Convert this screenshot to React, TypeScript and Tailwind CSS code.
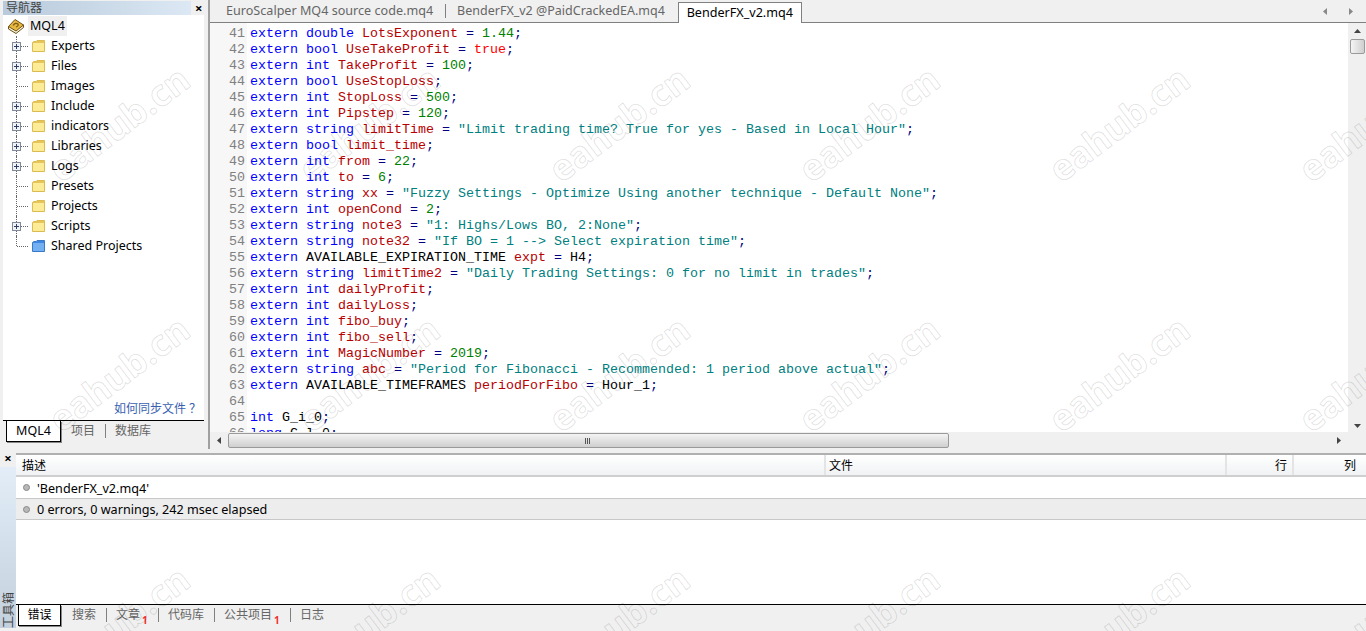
import { ReactNode } from 'react';

const uiFont = "font-['Noto_Sans','Noto_Sans_CJK_SC',sans-serif]";

const folders = [
  { name: 'Experts', plus: true },
  { name: 'Files', plus: true },
  { name: 'Images', plus: false },
  { name: 'Include', plus: true },
  { name: 'indicators', plus: true },
  { name: 'Libraries', plus: true },
  { name: 'Logs', plus: true },
  { name: 'Presets', plus: false },
  { name: 'Projects', plus: false },
  { name: 'Scripts', plus: true },
  { name: 'Shared Projects', plus: false, blue: true },
];

const code: [number, string][] = [
  [41, 'extern double LotsExponent = 1.44;'],
  [42, 'extern bool UseTakeProfit = true;'],
  [43, 'extern int TakeProfit = 100;'],
  [44, 'extern bool UseStopLoss;'],
  [45, 'extern int StopLoss = 500;'],
  [46, 'extern int Pipstep = 120;'],
  [47, 'extern string limitTime = "Limit trading time? True for yes - Based in Local Hour";'],
  [48, 'extern bool limit_time;'],
  [49, 'extern int from = 22;'],
  [50, 'extern int to = 6;'],
  [51, 'extern string xx = "Fuzzy Settings - Optimize Using another technique - Default None";'],
  [52, 'extern int openCond = 2;'],
  [53, 'extern string note3 = "1: Highs/Lows BO, 2:None";'],
  [54, 'extern string note32 = "If BO = 1 --> Select expiration time";'],
  [55, 'extern AVAILABLE_EXPIRATION_TIME expt = H4;'],
  [56, 'extern string limitTime2 = "Daily Trading Settings: 0 for no limit in trades";'],
  [57, 'extern int dailyProfit;'],
  [58, 'extern int dailyLoss;'],
  [59, 'extern int fibo_buy;'],
  [60, 'extern int fibo_sell;'],
  [61, 'extern int MagicNumber = 2019;'],
  [62, 'extern string abc = "Period for Fibonacci - Recommended: 1 period above actual";'],
  [63, 'extern AVAILABLE_TIMEFRAMES periodForFibo = Hour_1;'],
  [64, ''],
  [65, 'int G_i_0;'],
  [66, 'long G_l_0;'],
];

const keywords = ['extern', 'double', 'bool', 'int', 'long', 'string'];
const plainWords = ['AVAILABLE_EXPIRATION_TIME', 'AVAILABLE_TIMEFRAMES', 'H4', 'Hour_1', 'G_i_0', 'G_l_0'];

function tokenColor(tok: string) {
  if (tok.startsWith('"')) return 'text-[#008080]';
  if (keywords.includes(tok)) return 'text-[#0000ff]';
  if (tok === 'true') return 'text-[#ff0000]';
  if (/^[0-9.]+$/.test(tok)) return 'text-[#008000]';
  if (plainWords.includes(tok)) return 'text-black';
  if (/^\w+$/.test(tok)) return 'text-[#b80000]';
  return 'text-[#000080]';
}

function CodeLine({ text }: { text: string }) {
  const tokens = text.match(/"[^"]*"|[\w.]+|\s+|[=;]/g) || [];
  return (
    <div className="h-4 leading-4 whitespace-pre">
      {tokens.map((t, i) => (
        <span key={i} className={tokenColor(t)}>{t}</span>
      ))}
    </div>
  );
}

function FolderIcon({ blue }: { blue?: boolean }) {
  return (
    <svg width="13" height="12" viewBox="0 0 13 12" className="shrink-0">
      <path d="M0.5 11.500V2.500L2 1.500H4L5 0.500H12.500V11.500z" fill={blue ? '#3f86e0' : '#e6c65a'} stroke={blue ? '#3a78c8' : '#dcbb50'} />
      <rect x="1" y="3" width="11" height="8" fill={blue ? '#72b0f2' : '#fcec98'} />
    </svg>
  );
}

function BookIcon() {
  return (
    <svg width="16" height="15" viewBox="0 0 16 15" className="shrink-0">
      <path d="M0.500 7.500L0.500 10L8 14.500L15.500 8.500L15.500 6z" fill="#f7f1d8" stroke="#6e5216" />
      <path d="M0.500 7.500L7 0.500L15.500 6L8 12z" fill="#e6b840" stroke="#6e5216" />
      <path d="M5 6.500Q7.500 3 10 5Q11 7 8 8" fill="none" stroke="#7a5a18" strokeWidth="1.200" />
    </svg>
  );
}

function TreeRow({ name, plus, blue, last }: { name: string; plus: boolean; blue?: boolean; last: boolean }) {
  return (
    <div className="flex h-5 items-center">
      <div className="relative h-5 w-[26px] shrink-0">
        <div className={`absolute left-[13px] top-0 border-l border-dotted border-[#666] ${last ? 'h-[10px]' : 'h-5'}`} />
        <div className="absolute left-[14px] top-[10px] w-[11px] border-t border-dotted border-[#666]" />
        {plus && (
          <div className="absolute left-[9px] top-[6px] flex h-[9px] w-[9px] items-center justify-center border border-[#7f8a9c] bg-[#f2f2f2]">
            <svg width="7" height="7" viewBox="0 0 7 7">
              <path d="M1 3.500h5M3.500 1v5" stroke="#2b3f6b" />
            </svg>
          </div>
        )}
      </div>
      <div className="ml-[3px]"><FolderIcon blue={blue} /></div>
      <span className="ml-[6px] text-[12.5px] leading-5 text-black">{name}</span>
    </div>
  );
}

function TabSep() {
  return <div className="-mr-px h-[14px] w-px bg-[#808080]" />;
}

function Grey({ children, cjk }: { children: ReactNode; cjk?: boolean }) {
  return <span className={`${cjk ? 'text-[12px]' : 'text-[12.6px]'} text-[#666]`}>{children}</span>;
}

function Badge() {
  return <span className="relative top-[5px] ml-[2px] w-[6px] text-[10px] font-bold leading-none text-[#f03030]">1</span>;
}

function Navigator() {
  return (
    <div className="flex h-[449px] w-[210px] shrink-0 flex-col border-r-2 border-[#a0a0a0] pl-[3px] pr-[4px] pt-px">
      <div className="flex h-[14px] items-center">
        <div className="flex h-[14px] w-[188px] items-center bg-gradient-to-r from-[#b8cadb] to-[#dce8f4] pl-[3px] text-[12px] leading-[14px] text-[#444]">导航器</div>
        <span className="ml-[4px] text-[13px] font-bold leading-none text-black">×</span>
      </div>
      <div className="flex h-[406px] flex-col border-b border-black bg-white pt-px">
        <div className="flex h-[20px] items-center pl-[5px]">
          <BookIcon />
          <span className="ml-[4px] bg-[#f0f0f0] px-[2px] text-[12.5px] leading-[20px]">MQL4</span>
        </div>
        {folders.map((f, i) => (
          <TreeRow key={f.name} name={f.name} plus={f.plus} blue={f.blue} last={i === folders.length - 1} />
        ))}
        <div className="mt-auto pb-[1px] pr-[3px] text-right text-[12px] leading-5 text-[#3a5fb0]">如何同步文件 ？</div>
      </div>
      <div className="flex h-[26px] items-start">
        <div className="ml-[3px] flex h-[21px] w-[55px] items-center justify-center border-x border-b border-black bg-white text-[12.5px] shadow-[1px_1px_0_#888]">MQL4</div>
        <div className="ml-[10px] flex h-[20px] items-center gap-[10px]">
          <Grey cjk>项目</Grey>
          <TabSep />
          <Grey cjk>数据库</Grey>
        </div>
      </div>
    </div>
  );
}

function Editor() {
  return (
    <div className="flex h-[449px] flex-1 flex-col overflow-hidden">
      <div className="flex h-[23px] shrink-0 items-end border-b border-[#808080] pl-[16px]">
        <div className="flex h-[22px] items-center">
          <Grey>EuroScalper MQ4 source code.mq4</Grey>
          <div className="mx-[12px]"><TabSep /></div>
          <span className="text-[12.5px] text-[#666]">BenderFX_v2 @PaidCrackedEA.mq4</span>
        </div>
        <div className="relative top-px ml-[13px] flex h-[21px] w-[124px] items-center justify-center border-x border-t border-[#808080] bg-white text-[12.6px] text-black">BenderFX_v2.mq4</div>
        <div className="ml-auto mr-[13px] flex h-[22px] items-center gap-[22px]">
          <svg width="4" height="7" viewBox="0 0 4 7"><path d="M4 0v7L0 3.5z" fill="#888" /></svg>
          <svg width="4" height="7" viewBox="0 0 4 7"><path d="M0 0v7l4-3.5z" fill="#888" /></svg>
        </div>
      </div>
      <div className="flex min-h-0 flex-1 bg-white">
        <div className="flex min-w-0 flex-1 flex-col">
          <div className="flex min-h-0 flex-1 overflow-hidden font-['Liberation_Mono',monospace] text-[13.33px]">
            <div className="h-full w-[37px] shrink-0 bg-[#f7f7f7] pr-[2px] pt-[3px] text-right text-[#808080]">
              {code.map(([n]) => <div key={n} className="h-4 leading-4">{n}</div>)}
            </div>
            <div className="pl-[3px] pt-[3px]">
              {code.map(([n, t]) => <CodeLine key={n} text={t} />)}
            </div>
          </div>
          <div className="flex h-[17px] shrink-0 items-center bg-[#f0f0f0]">
            <div className="flex w-[18px] justify-center">
              <svg width="4" height="7" viewBox="0 0 4 7"><path d="M4 0v7L0 3.5z" fill="#444" /></svg>
            </div>
            <div className="flex h-[15px] w-[721px] items-center justify-center rounded-[2px] border border-[#9a9a9a] bg-gradient-to-b from-[#f4f4f4] to-[#cfcfcf]">
              <div className="ml-[-2px] flex gap-px">
                <div className="h-[6px] w-px bg-[#555]" /><div className="h-[6px] w-px bg-[#555]" /><div className="h-[6px] w-px bg-[#555]" />
              </div>
            </div>
            <div className="ml-auto mr-[7px]">
              <svg width="4" height="7" viewBox="0 0 4 7"><path d="M0 0v7l4-3.5z" fill="#444" /></svg>
            </div>
          </div>
        </div>
        <div className="flex w-[18px] shrink-0 flex-col items-center bg-[#f0f0f0] pt-[6px]">
          <svg width="7" height="4" viewBox="0 0 7 4"><path d="M0 4h7L3.500 0z" fill="#444" /></svg>
          <div className="mt-[6px] h-[15px] w-[15px] rounded-[2px] border border-[#9a9a9a] bg-gradient-to-r from-[#f4f4f4] to-[#cfcfcf]" />
          <div className="mt-auto mb-[21px]">
            <svg width="7" height="4" viewBox="0 0 7 4"><path d="M0 0h7L3.500 4z" fill="#444" /></svg>
          </div>
        </div>
      </div>
    </div>
  );
}

function Toolbox() {
  return (
    <div className="flex min-h-0 flex-1 pt-[4px]">
      <div className="flex w-[16px] shrink-0 flex-col pb-[3px]">
        <div className="flex h-[14px] items-start justify-center text-[13px] font-bold leading-[10px]">×</div>
        <div className="flex flex-1 items-end justify-center bg-gradient-to-b from-[#e2edf7] to-[#c3d1de]">
          <span className="rotate-180 text-[12px] leading-[15px] text-[#444] [text-orientation:sideways] [writing-mode:vertical-rl]">工具箱</span>
        </div>
      </div>
      <div className="flex min-w-0 flex-1 flex-col">
        <div className="flex min-h-0 flex-1 flex-col border-t-2 border-[#b0b0b0] bg-white">
          <div className="flex h-[22px] shrink-0 border-b-2 border-[#cfcfcf] bg-gradient-to-b from-white to-[#f0f2f4] text-[12px] text-black">
            <div className="w-[810px] border-r-2 border-[#e4e4e4] pl-[6px] leading-[22px]">描述</div>
            <div className="w-[401px] border-r-2 border-[#e4e4e4] pl-[3px] leading-[22px]">文件</div>
            <div className="w-[67px] border-r-2 border-[#e4e4e4] pr-[5px] text-right leading-[22px]">行</div>
            <div className="w-[67px] pr-[5px] text-right leading-[22px]">列</div>
          </div>
          <div className="flex h-[22px] items-center border-b border-[#c8c8c8] pl-[7px] text-[12.6px]">
            <div className="h-[7px] w-[7px] rounded-full border border-[#888] bg-[#b8b8b8]" />
            <span className="ml-[7px] pt-[3px]">'BenderFX_v2.mq4'</span>
          </div>
          <div className="flex h-[21px] items-center border-b border-[#c8c8c8] bg-[#ededed] pl-[7px] text-[12.6px]">
            <div className="h-[7px] w-[7px] rounded-full border border-[#888] bg-[#b8b8b8]" />
            <span className="ml-[7px] pt-[3px]">0 errors, 0 warnings, 242 msec elapsed</span>
          </div>
        </div>
        <div className="flex h-[21px] shrink-0 items-start border-t border-black">
          <div className="ml-[2px] flex h-[21px] w-[43px] items-center justify-center border-x border-b border-black bg-white text-[12px] shadow-[1px_1px_0_#888]">错误</div>
          <div className="ml-[11px] flex h-[20px] items-center gap-[10px]">
            <Grey cjk>搜索</Grey>
            <TabSep />
            <div className="flex items-center"><Grey cjk>文章</Grey><Badge /></div>
            <TabSep />
            <Grey cjk>代码库</Grey>
            <TabSep />
            <div className="flex items-center"><Grey cjk>公共项目</Grey><Badge /></div>
            <TabSep />
            <Grey cjk>日志</Grey>
          </div>
        </div>
        <div className="h-[6px] shrink-0" />
      </div>
    </div>
  );
}

const marks: { x: number; y: number }[] = [];
for (const y of [124, 374, 624]) {
  for (const x of [119, 369, 619, 869, 1119, 1369]) marks.push({ x, y });
}

export default function App() {
  return (
    <div className={`relative flex h-[631px] w-[1366px] flex-col overflow-hidden bg-[#f0f0f0] ${uiFont}`}>
      <div className="flex shrink-0">
        <Navigator />
        <Editor />
      </div>
      <Toolbox />
      <div className="pointer-events-none absolute inset-0 overflow-hidden">
        {marks.map((m, i) => (
          <span
            key={i}
            className="absolute -translate-x-1/2 -translate-y-1/2 -rotate-[37deg] whitespace-nowrap font-['Noto_Sans',sans-serif] text-[36px] font-bold leading-none text-transparent [-webkit-text-stroke:1px_rgba(0,0,0,0.12)]"
            style={{ left: m.x, top: m.y }}
          >
            eahub.cn
          </span>
        ))}
      </div>
    </div>
  );
}
